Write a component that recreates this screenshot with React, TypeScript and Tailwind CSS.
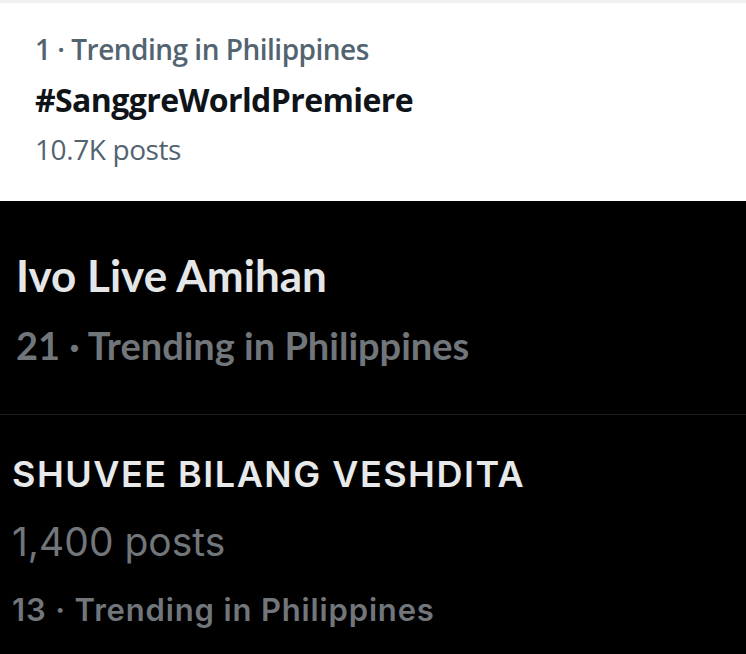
export default function App() {
  return (
    <div className="w-[746px] h-[654px] overflow-hidden flex flex-col bg-black">
      {/* light screenshot */}
      <div className="h-[201px] shrink-0 bg-white border-t-[3px] border-[#eef0f2] pl-[35px] pt-[28px] flex flex-col font-['Open_Sans',sans-serif]">
        <div className="text-[28px] leading-[36px] font-semibold text-[#536471] tracking-[-0.5px]">
          1 · Trending in Philippines
        </div>
        <div className="mt-[13px] text-[32px] leading-[40px] font-bold text-[#0f1419] tracking-[-0.6px]">
          #SanggreWorldPremiere
        </div>
        <div className="mt-[11px] text-[28px] leading-[36px] text-[#536471] tracking-[-0.4px]">
          10.7K posts
        </div>
      </div>

      {/* dark screenshot 1 */}
      <div className="h-[214px] shrink-0 border-b border-[#1c1c1c] pl-[16px] pt-[49px] flex flex-col font-['Lato',sans-serif]">
        <div className="text-[44px] leading-[50px] font-bold text-[#e4e6e7]">Ivo Live Amihan</div>
        <div className="mt-[22px] text-[38px] leading-[46px] font-bold text-[#71767b]">
          21 · Trending in Philippines
        </div>
      </div>

      {/* dark screenshot 2 */}
      <div className="flex-1 pl-[12px] pt-[37px] flex flex-col font-['Inter',sans-serif]">
        <div className="text-[36px] leading-[44px] font-semibold text-[#e7e9ea] tracking-[1.5px]">
          SHUVEE BILANG VESHDITA
        </div>
        <div className="mt-[23px] text-[39px] leading-[46px] text-[#71767b]">1,400 posts</div>
        <div className="mt-[25px] text-[31px] leading-[40px] font-semibold text-[#71767b] tracking-[0.85px]">
          13 · Trending in Philippines
        </div>
      </div>
    </div>
  );
}
